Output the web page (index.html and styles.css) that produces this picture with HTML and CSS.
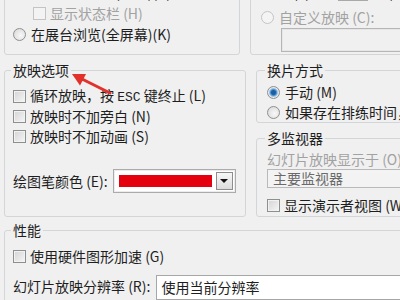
FILE: index.html
```html
<!DOCTYPE html>
<html lang="zh-CN">
<head>
<meta charset="utf-8">
<link rel="stylesheet" href="styles.css">
</head>
<body>
<div class="dlg">
  <div class="toprow">
    <div class="box box-l">
      <div class="row"><span class="radio"></span><span class="t">观众自行浏览(窗口)(B)</span></div>
      <div class="row sub dis"><span class="cb cb-dis"></span><span class="t">显示状态栏 (H)</span></div>
      <div class="row r3"><span class="radio"></span><span class="t">在展台浏览(全屏幕)(K)</span></div>
    </div>
    <div class="box box-r">
      <div class="row"><span class="radio"></span><span class="t">从(F):</span><span class="num"></span><span class="t">到(T):</span><span class="num"></span></div>
      <div class="row r2 dis"><span class="radio radio-dis"></span><span class="t">自定义放映 (C):</span></div>
      <div class="field-dis"></div>
    </div>
  </div>
  <div class="midrow">
    <fieldset class="grp opts">
      <legend>放映选项</legend>
      <div class="row"><span class="cb"></span><span class="t">循环放映，按 <span class="mono">ESC</span> 键终止 (L)</span></div>
      <div class="row"><span class="cb"></span><span class="t">放映时不加旁白 (N)</span></div>
      <div class="row"><span class="cb"></span><span class="t">放映时不加动画 (S)</span></div>
      <div class="row pen"><span class="t">绘图笔颜色 (E):</span>
        <div class="colorpick"><span class="swatch"></span><span class="ddbtn"><span class="tri"></span></span></div>
      </div>
    </fieldset>
    <div class="rcol">
      <fieldset class="grp adv">
        <legend>换片方式</legend>
        <div class="row"><span class="radio radio-on"></span><span class="t">手动 (M)</span></div>
        <div class="row"><span class="radio"></span><span class="t">如果存在排练时间，则使用它 (U)</span></div>
      </fieldset>
      <fieldset class="grp mon">
        <legend>多监视器</legend>
        <div class="row dis"><span class="t">幻灯片放映显示于 (O):</span></div>
        <div class="select-dis">主要监视器</div>
        <div class="row r-pres"><span class="cb"></span><span class="t">显示演示者视图 (W)</span></div>
      </fieldset>
    </div>
  </div>
  <fieldset class="grp perf">
    <legend>性能</legend>
    <div class="row"><span class="cb"></span><span class="t">使用硬件图形加速 (G)</span></div>
    <div class="res">
      <span class="res-label">幻灯片放映分辨率 (R):</span>
      <div class="select">使用当前分辨率</div>
    </div>
  </fieldset>
</div>
<svg class="arrow" width="120" height="100" viewBox="0 0 120 100">
  <line x1="110" y1="93" x2="82" y2="79" stroke="#e2302a" stroke-width="3" stroke-linecap="round"/>
  <polygon points="72,74 86,74 80,85.5" fill="#e2302a"/>
</svg>
</body>
</html>
```
FILE: styles.css
```css
* { box-sizing: border-box; }
html, body { margin: 0; padding: 0; }
body {
  width: 400px;
  height: 300px;
  overflow: hidden;
  position: relative;
  background: #f0f0f0;
  font-family: "Noto Sans CJK SC", sans-serif;
  font-size: 14px;
  color: #1e1e1e;
}
.dlg { width: 470px; margin-top: -19px; }

.row {
  display: flex;
  align-items: center;
  height: 20px;
  line-height: 20px;
  white-space: nowrap;
}
.t { white-space: pre; }
.dis { color: #a2a2a2; }
.mono { font-family: "Liberation Mono", monospace; font-size: 13px; }

.cb {
  flex: none;
  width: 13px;
  height: 13px;
  margin-right: 4px;
  border: 1px solid #8e8f8f;
  background: linear-gradient(135deg, #d4d4d4, #f6f6f6);
  box-shadow: inset 0 0 0 1px #f2f2f2;
}
.cb-dis { border-color: #c4c4c4; background: #f3f3f3; box-shadow: none; }

.radio {
  flex: none;
  width: 13px;
  height: 13px;
  margin-right: 5px;
  border: 1px solid #8e8f8f;
  border-radius: 50%;
  background: radial-gradient(circle at 60% 60%, #f8f8f8, #d6d6d6);
}
.radio-dis { border-color: #c4c4c4; background: #f4f4f4; }
.radio-on {
  background: radial-gradient(circle, #1d5f9e 0 2px, #4a8fd0 3px, #9cc4ea 4px, #eaeaea 5px, #d8d8d8 6px);
}

/* top, cut-off group boxes */
.toprow { display: flex; padding-left: 4px; }
.box {
  height: 74px;
  border: 1px solid #d3d6d8;
  border-radius: 3px;
}
.box-l { width: 242px; padding-left: 8px; }
.box-l .sub { padding-left: 20px; margin-top: 1px; }
.box-l .r3 { margin-top: 1px; }
.box-r { width: 220px; margin-left: 10px; padding-left: 10px; }
.num {
  display: inline-block;
  width: 52px;
  height: 18px;
  margin: 0 6px 0 24px;
  border: 1px solid #a9a9a9;
  background: #fff;
}
.box-r .r2 { margin-top: 5px; }
.field-dis {
  height: 24px;
  margin: 1px 0 0 20px;
  border: 1px solid #b5b5b5;
  box-shadow: inset 0 0 0 1px #e6e6e6;
  background: #f0f0f0;
}

/* group boxes */
.grp {
  margin: 0;
  padding: 0 8px;
  min-width: 0;
  border: 1px solid #d3d6d8;
  border-radius: 3px;
}
.grp legend {
  padding: 0 2px;
  margin-left: -2px;
  line-height: 16px;
  font-size: 14px;
}

.midrow { display: flex; margin-top: 7px; padding-left: 4px; }
.opts { width: 242px; padding-top: 8px; padding-bottom: 23px; }
.pen { margin-top: 23px; height: 24px; }
.colorpick {
  display: flex;
  align-items: center;
  width: 123px;
  height: 24px;
  margin-left: 5px;
  padding: 0 2px 0 5px;
  border: 1px solid #ababab;
  background: #fff;
  box-shadow: inset 0 0 0 1px #ececec;
}
.swatch { width: 95px; height: 12px; background: #e5000f; }
.ddbtn {
  display: flex;
  align-items: center;
  justify-content: center;
  width: 17px;
  height: 18px;
  margin-left: 4px;
  border: 1px solid #8d8d8d;
  background: linear-gradient(#f7f7f7, #dcdcdc);
}
.tri {
  width: 0;
  height: 0;
  border-left: 4px solid transparent;
  border-right: 4px solid transparent;
  border-top: 4px solid #111;
}

.rcol { width: 214px; margin-left: 10px; display: flex; flex-direction: column; }
.rcol .grp { padding-left: 10px; }
.adv { padding-top: 4px; padding-bottom: 0; }
.mon { margin-top: 7px; padding-top: 3px; padding-bottom: 1px; }
.select-dis {
  height: 19px;
  margin-top: 0;
  margin-right: -12px;
  padding-left: 5px;
  line-height: 17px;
  border: 1px solid #b9b9b9;
  background: #f3f3f3;
  color: #6a6a6a;
  white-space: nowrap;
}
.r-pres { margin-top: 7px; }

.perf { width: 466px; margin-left: 4px; margin-top: 5px; padding-top: 8px; padding-bottom: 10px; }
.res { display: flex; align-items: flex-start; margin-top: 9px; }
.res-label { line-height: 20px; margin-top: 1px; white-space: nowrap; }
.select {
  width: 300px;
  height: 25px;
  margin-left: 6px;
  padding-left: 4px;
  line-height: 23px;
  border: 1px solid #a7a7a7;
  background: #fff;
  white-space: nowrap;
}

.arrow { position: absolute; left: 0; top: 0; }
```
